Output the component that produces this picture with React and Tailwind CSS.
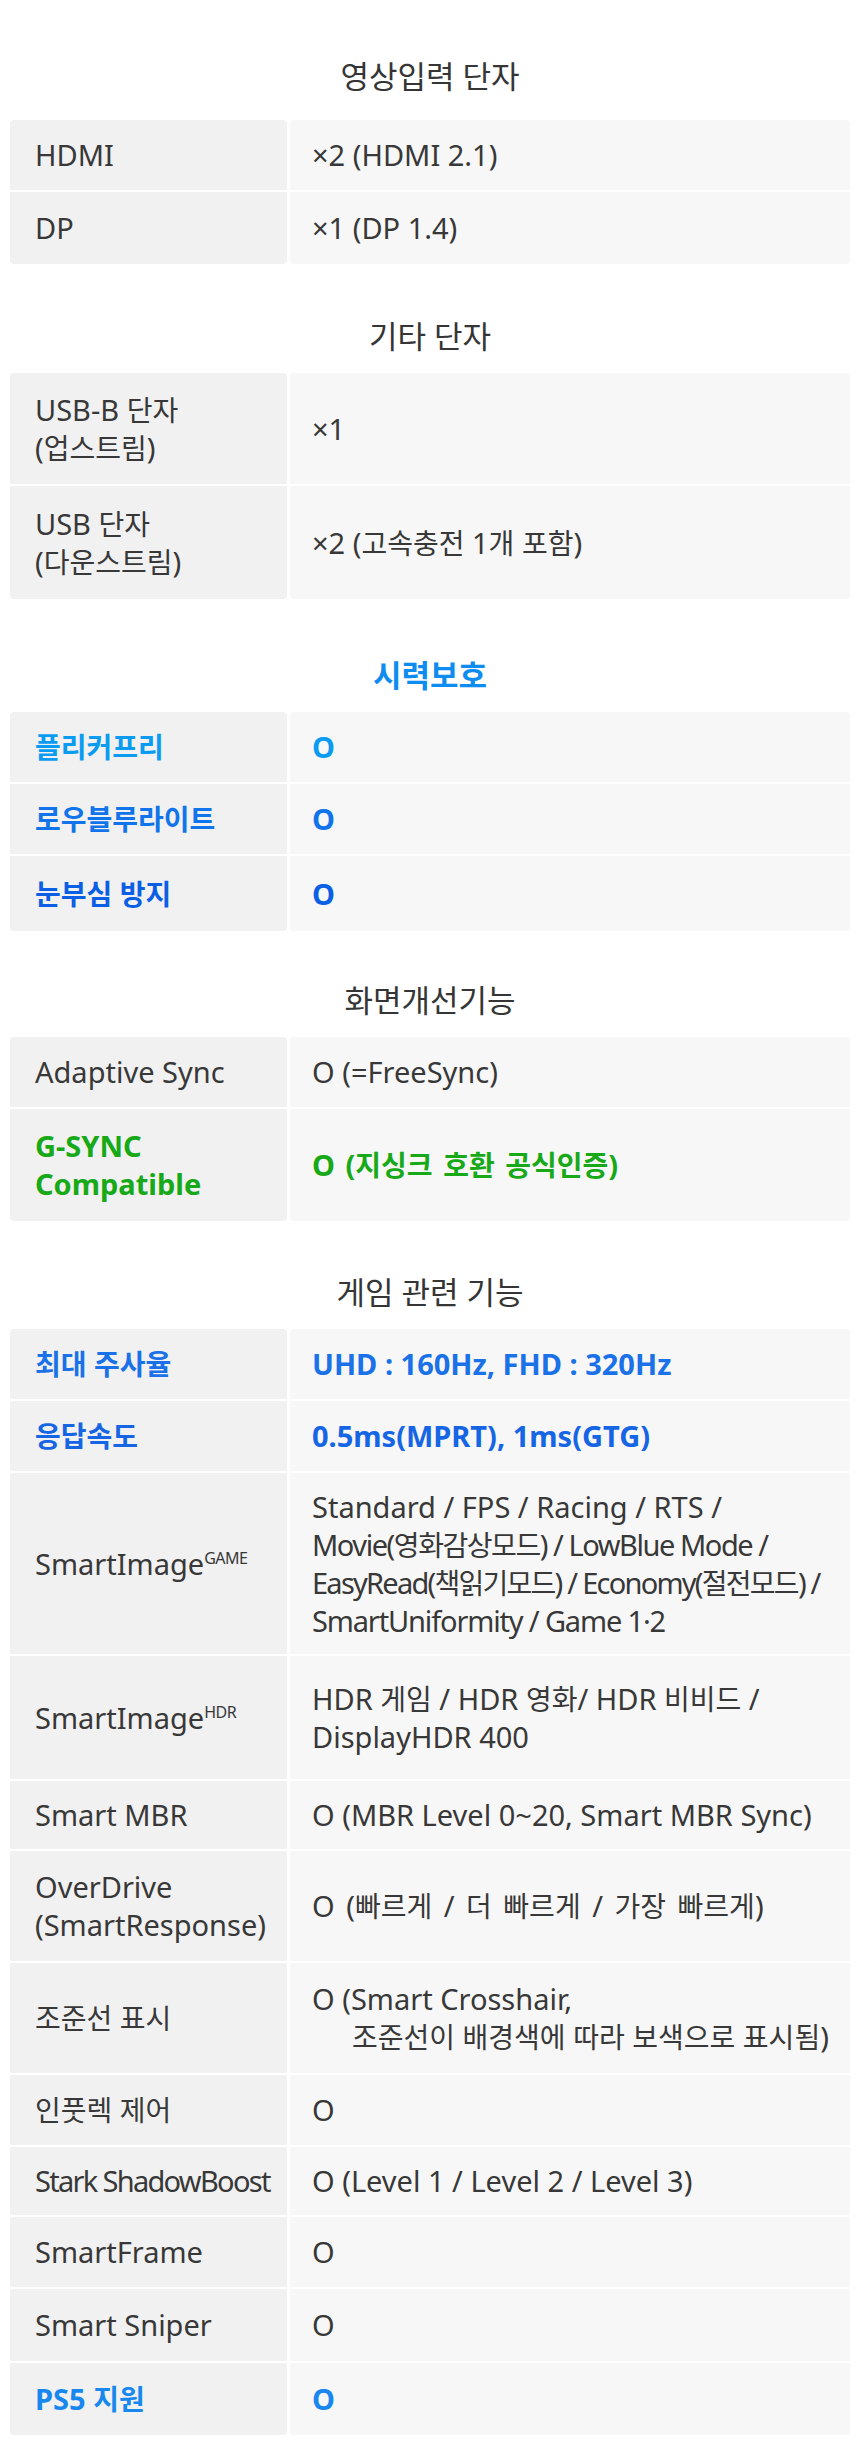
import React from "react";

const HANGUL_SPLIT = /([\u1100-\u11FF\u3130-\u318F\uAC00-\uD7AF]+)/;
const HANGUL_TEST = /^[\u1100-\u11FF\u3130-\u318F\uAC00-\uD7AF]+$/;

function K({ text }) {
  return text.split(HANGUL_SPLIT).map((p, i) =>
    HANGUL_TEST.test(p) ? (
      <span key={i} className="text-[28px]">
        {p}
      </span>
    ) : (
      <span key={i}>{p}</span>
    )
  );
}

function Lines({ lines, extra = "" }) {
  return (
    <div className={`flex flex-col ${extra}`}>
      {lines.map((l, i) => {
        const text = typeof l === "string" ? l : l[0];
        const cls = typeof l === "string" ? "" : l[1];
        return (
          <div key={i} className={`whitespace-nowrap ${cls}`}>
            <K text={text} />
          </div>
        );
      })}
    </div>
  );
}

const sections = [
  {
    title: "영상입력 단자",
    wrap: "pt-[56px]",
    titleCls: "text-[#353535] font-normal",
    mb: "mb-[24px]",
    rows: [
      { h: "h-[70px]", label: ["HDMI"], value: ["×2 (HDMI 2.1)"] },
      { h: "h-[72px]", label: ["DP"], value: ["×1 (DP 1.4)"] },
    ],
  },
  {
    title: "기타 단자",
    wrap: "pt-[52px]",
    titleCls: "text-[#353535] font-normal",
    mb: "mb-[17px]",
    rows: [
      { h: "h-[111px]", label: ["USB-B 단자", "(업스트림)"], value: ["×1"] },
      { h: "h-[113px]", label: ["USB 단자", "(다운스트림)"], value: ["×2 (고속충전 1개 포함)"] },
    ],
  },
  {
    title: "시력보호",
    wrap: "pt-[56px]",
    titleCls: "text-[#0e8cf0] font-bold",
    mb: "mb-[17px]",
    rows: [
      { h: "h-[70px]", label: ["플리커프리"], value: ["O"], color: "text-[#0b9cf1] font-bold" },
      { h: "h-[70px]", label: ["로우블루라이트"], value: ["O"], color: "text-[#1274ea] font-bold" },
      { h: "h-[75px]", label: ["눈부심 방지"], value: ["O"], color: "text-[#0b5fe5] font-bold" },
    ],
  },
  {
    title: "화면개선기능",
    wrap: "pt-[49px]",
    titleCls: "text-[#353535] font-normal",
    mb: "mb-[17px]",
    rows: [
      { h: "h-[70px]", label: ["Adaptive Sync"], value: ["O (=FreeSync)"] },
      {
        h: "h-[112px]",
        label: ["G-SYNC", "Compatible"],
        value: [["O (지싱크 호환 공식인증)", "[word-spacing:3px]"]],
        color: "text-[#18a918] font-bold",
      },
    ],
  },
  {
    title: "게임 관련 기능",
    wrap: "pt-[51px]",
    titleCls: "text-[#353535] font-normal",
    mb: "mb-[17px]",
    rows: [
      {
        h: "h-[70px]",
        label: ["최대 주사율"],
        value: ["UHD : 160Hz, FHD : 320Hz"],
        color: "text-[#1a71e8] font-bold",
      },
      {
        h: "h-[70px]",
        label: ["응답속도"],
        value: ["0.5ms(MPRT), 1ms(GTG)"],
        color: "text-[#1565e4] font-bold",
      },
      {
        h: "h-[181px]",
        sup: "GAME",
        label: ["SmartImage"],
        value: [
          ["Standard / FPS / Racing / RTS /", "tracking-[0px]"],
          ["Movie(영화감상모드) / LowBlue Mode /", "tracking-[-1.45px]"],
          ["EasyRead(책읽기모드) / Economy(절전모드) /", "tracking-[-1.75px]"],
          ["SmartUniformity / Game 1·2", "tracking-[-1.15px]"],
        ],
        valueCls: "leading-[38px]",
      },
      {
        h: "h-[123px]",
        sup: "HDR",
        label: ["SmartImage"],
        value: ["HDR 게임 / HDR 영화/ HDR 비비드 /", "DisplayHDR 400"],
      },
      { h: "h-[68px]", label: ["Smart MBR"], value: ["O (MBR Level 0~20, Smart MBR Sync)"] },
      {
        h: "h-[110px]",
        label: ["OverDrive", "(SmartResponse)"],
        value: [["O (빠르게 / 더 빠르게 / 가장 빠르게)", "[word-spacing:4px]"]],
      },
      {
        h: "h-[110px]",
        label: ["조준선 표시"],
        crosshair: true,
      },
      { h: "h-[70px]", label: ["인풋렉 제어"], value: ["O"] },
      {
        h: "h-[68px]",
        label: ["Stark ShadowBoost"],
        labelCls: "tracking-[-1.7px]",
        value: ["O (Level 1 / Level 2 / Level 3)"],
      },
      { h: "h-[70px]", label: ["SmartFrame"], value: ["O"] },
      { h: "h-[72px]", label: ["Smart Sniper"], value: ["O"] },
      { h: "h-[72px]", label: ["PS5 지원"], value: ["O"], color: "text-[#1888ee] font-bold" },
    ],
  },
];

function Row({ row, first, last }) {
  const round = `${first ? "rounded-t-[4px]" : ""} ${last ? "rounded-b-[4px]" : ""}`;
  const color = row.color || "text-[#383838]";
  return (
    <div className={`flex gap-[3px] ${row.h}`}>
      <div
        className={`w-[277px] shrink-0 flex items-center pl-[25px] bg-[#f1f1f1] ${round} ${color}`}
      >
        {row.sup ? (
          <div className="whitespace-nowrap">
            SmartImage
            <sup className="text-[16px] -top-[11px] tracking-[-0.5px]">{row.sup}</sup>
          </div>
        ) : (
          <Lines lines={row.label} extra={row.labelCls || ""} />
        )}
      </div>
      <div className={`flex-1 flex items-center pl-[22px] bg-[#f7f7f7] ${round} ${color}`}>
        {row.crosshair ? (
          <div className="flex flex-col">
            <div className="whitespace-nowrap">
              <K text="O (Smart Crosshair," />
            </div>
            <div className="whitespace-nowrap pl-[40px]">
              <K text="조준선이 배경색에 따라 보색으로 표시됨)" />
            </div>
          </div>
        ) : (
          <Lines lines={row.value} extra={row.valueCls || ""} />
        )}
      </div>
    </div>
  );
}

export default function App() {
  return (
    <div
      className="w-[860px] min-h-[2439px] bg-white px-[10px] pb-[6px] text-[29px] leading-[38px] text-[#383838]"
      style={{ fontFamily: '"Noto Sans", "Noto Sans CJK KR", sans-serif' }}
    >
      {sections.map((s, si) => (
        <section key={si} className={s.wrap}>
          <h2 className={`text-center text-[31px] leading-[40px] ${s.titleCls} ${s.mb}`}>
            {s.title}
          </h2>
          <div className="flex flex-col gap-[2px]">
            {s.rows.map((r, ri) => (
              <Row key={ri} row={r} first={ri === 0} last={ri === s.rows.length - 1} />
            ))}
          </div>
        </section>
      ))}
    </div>
  );
}
